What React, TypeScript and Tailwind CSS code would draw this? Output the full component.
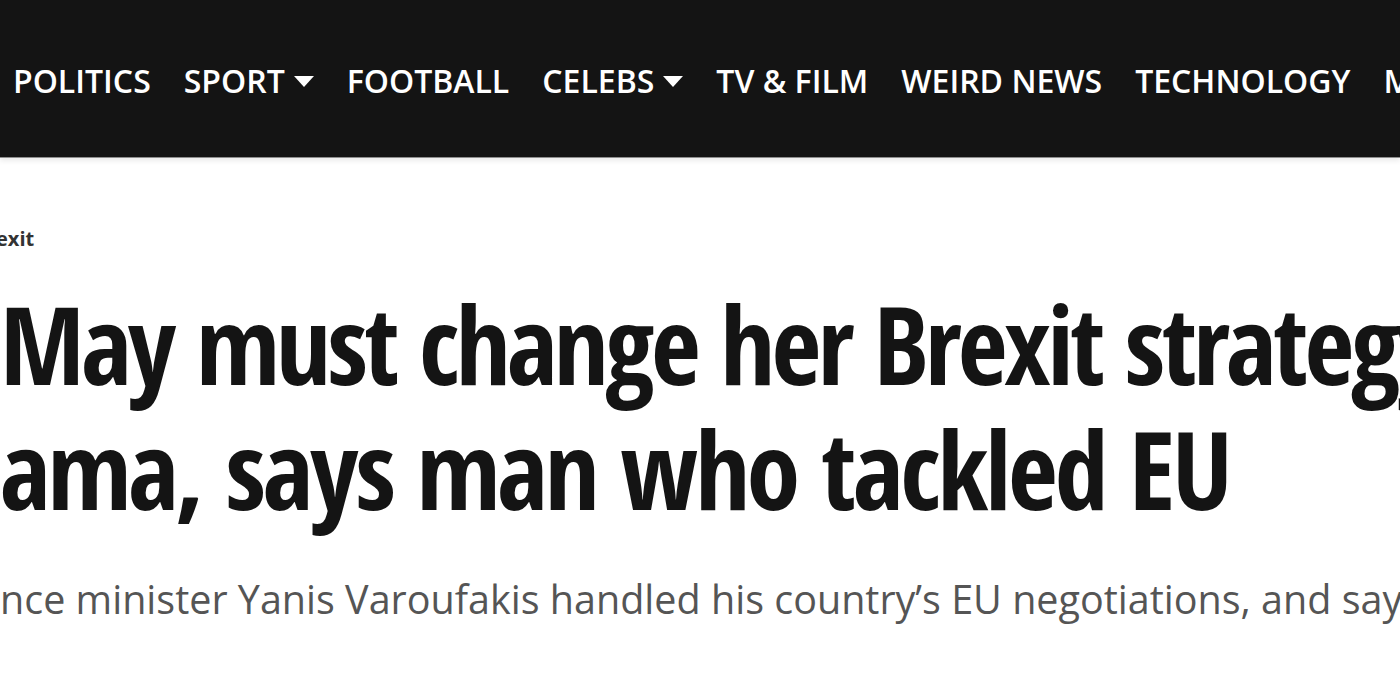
const navItems = [
  { label: 'POLITICS' },
  { label: 'SPORT', menu: true },
  { label: 'FOOTBALL' },
  { label: 'CELEBS', menu: true },
  { label: 'TV & FILM' },
  { label: 'WEIRD NEWS' },
  { label: 'TECHNOLOGY' },
  { label: 'MONEY' },
];

function Caret() {
  return (
    <span className="ml-[9px] inline-block h-0 w-0 border-x-[10px] border-t-[11px] border-x-transparent border-t-white" />
  );
}

export default function App() {
  return (
    <div className="h-[700px] w-[1400px] overflow-hidden bg-white">
      {/* ナビゲーション */}
      <header className="relative z-10 h-[158px] border-b border-[#8f8f8f] bg-[#141414] shadow-[0_3px_5px_rgba(0,0,0,0.08)]">
        <nav className="flex h-[162px] items-center gap-[33px] whitespace-nowrap pl-[13px] font-['Open_Sans',sans-serif] text-[32px] font-semibold text-white">
          {navItems.map((item) => (
            <a key={item.label} href="#" className="flex shrink-0 items-center">
              {item.label}
              {item.menu && <Caret />}
            </a>
          ))}
        </nav>
      </header>

      <main className="overflow-hidden">
        {/* パンくず */}
        <div className="mt-[66px] whitespace-nowrap font-['Open_Sans',sans-serif] text-[20px] font-bold leading-[30px] text-[#333]">
          <span className="-ml-[4px]">exit</span>
        </div>

        {/* 見出し */}
        <h1 className="mt-[27px] whitespace-nowrap font-['Noto_Sans_Condensed','Open_Sans_Condensed','Open_Sans',sans-serif] text-[108px] font-bold leading-[125px] tracking-[-3.5px] text-[#141414]">
          <span className="block">May must change her Brexit strategy</span>
          <span className="block tracking-[-3px]">ama, says man who tackled EU</span>
        </h1>

        {/* リード文 */}
        <p className="mt-[40px] whitespace-nowrap font-['Open_Sans',sans-serif] text-[39.5px] leading-[56px] text-[#555]">
          nce minister Yanis Varoufakis handled his country’s EU negotiations, and says
        </p>
      </main>
    </div>
  );
}
